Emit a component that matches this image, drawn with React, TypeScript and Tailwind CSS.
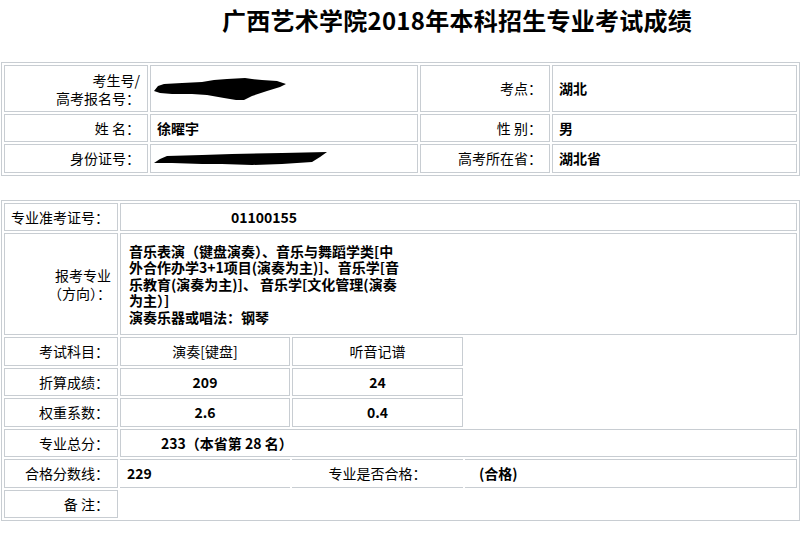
const cell = 'border border-[#c8cdd2] p-0 align-middle'
const label = 'border border-[#c8cdd2] p-0 align-middle text-right text-[14px] font-normal'
const font = { fontFamily: '"Noto Sans CJK SC", "Noto Sans", sans-serif' }

function BlobOne() {
  return (
    <svg width="136" height="26" viewBox="0 0 136 26" className="block">
      <path
        d="M2 15 L6 10 L12 8 L30 7 L50 6 L62 4 L75 3 L93 2 L100 3 L110 4 L125 5 L134 8 L128 11 L115 15 L100 20 L92 24 L84 24 L72 22 L55 19 L40 18 L20 18 L8 17 Z"
        fill="#000"
      />
    </svg>
  )
}

function BlobTwo() {
  return (
    <svg width="178" height="16" viewBox="0 0 178 16" className="block">
      <path
        d="M2 12 L8 8 L15 5 L50 4 L80 3 L130 2 L175 1 L168 6 L160 11 L130 13 L100 14 L70 13 L50 13 L20 12 Z"
        fill="#000"
      />
    </svg>
  )
}

export default function App() {
  return (
    <div className="w-[800px] h-[535px] bg-white text-black overflow-hidden" style={font}>
      {/* Title */}
      <div className="h-[62px] pl-[222px] pt-[5px]">
        <h1 className="text-[24px] leading-[30px] font-bold tracking-[0.25px] whitespace-nowrap">
          广西艺术学院2018年本科招生专业考试成绩
        </h1>
      </div>

      {/* Candidate info */}
      <table className="ml-[1px] w-[799px] table-fixed border-separate border-spacing-[2px] border border-[#c8cdd2]">
        <colgroup>
          <col className="w-[144px]" />
          <col className="w-[268px]" />
          <col className="w-[130px]" />
          <col className="w-[245px]" />
        </colgroup>
        <tbody>
          <tr>
            <td className={`${label} h-[47px] pr-[7px] leading-[18px]`}>
              考生号/<br />高考报名号：
            </td>
            <td className={`${cell} pl-[1px]`}>
              <BlobOne />
            </td>
            <td className={`${label} pr-[7px]`}>考点：</td>
            <td className={`${cell} pl-[6px] text-[14px] font-bold`}>湖北</td>
          </tr>
          <tr>
            <td className={`${label} h-[28px] pr-[7px]`}>姓 名：</td>
            <td className={`${cell} pl-[6px] text-[14px] font-bold`}>徐曜宇</td>
            <td className={`${label} pr-[7px]`}>性 别：</td>
            <td className={`${cell} pl-[6px] text-[14px] font-bold`}>男</td>
          </tr>
          <tr>
            <td className={`${label} h-[29px] pr-[7px]`}>身份证号：</td>
            <td className={`${cell} pl-[1px]`}>
              <BlobTwo />
            </td>
            <td className={`${label} pr-[7px]`}>高考所在省：</td>
            <td className={`${cell} pl-[6px] text-[14px] font-bold`}>湖北省</td>
          </tr>
        </tbody>
      </table>

      {/* Scores */}
      <table className="mt-[24px] ml-[1px] w-[799px] table-fixed border-separate border-spacing-[2px] border border-[#c8cdd2]">
        <colgroup>
          <col className="w-[114px]" />
          <col className="w-[170px]" />
          <col className="w-[171px]" />
          <col className="w-[332px]" />
        </colgroup>
        <tbody>
          <tr>
            <td className={`${label} h-[28px] pr-[8px]`}>专业准考证号：</td>
            <td colSpan={3} className={`${cell} pl-[110px] text-[14px] font-bold`}>01100155</td>
          </tr>
          <tr>
            <td className={`${label} h-[102px] pr-[6px] leading-[18px]`}>
              报考专业<br />（方向）：
            </td>
            <td colSpan={3} className={`${cell} pl-[8px] text-[14px] font-bold leading-[16.4px] whitespace-nowrap`}>
              音乐表演（键盘演奏）、音乐与舞蹈学类[中<br />
              外合作办学3+1项目(演奏为主)]、音乐学[音<br />
              乐教育(演奏为主)]、 音乐学[文化管理(演奏<br />
              为主）]<br />
              演奏乐器或唱法：钢琴
            </td>
          </tr>
          <tr>
            <td className={`${label} h-[29px] pr-[8px]`}>考试科目：</td>
            <td className={`${cell} text-center text-[14px]`}>演奏[键盘]</td>
            <td className={`${cell} text-center text-[14px]`}>听音记谱</td>
            <td className="p-0" />
          </tr>
          <tr>
            <td className={`${label} h-[28px] pr-[8px]`}>折算成绩：</td>
            <td className={`${cell} text-center text-[14px] font-bold`}>209</td>
            <td className={`${cell} text-center text-[14px] font-bold`}>24</td>
            <td className="p-0" />
          </tr>
          <tr>
            <td className={`${label} h-[29px] pr-[8px]`}>权重系数：</td>
            <td className={`${cell} text-center text-[14px] font-bold`}>2.6</td>
            <td className={`${cell} text-center text-[14px] font-bold`}>0.4</td>
            <td className="p-0" />
          </tr>
          <tr>
            <td className={`${label} h-[28px] pr-[8px]`}>专业总分：</td>
            <td colSpan={3} className={`${cell} pl-[40px] text-[14px] font-bold`}>233（本省第 28 名）</td>
          </tr>
          <tr>
            <td className={`${label} h-[29px] pr-[8px]`}>合格分数线：</td>
            <td className="p-0 pl-[7px] align-middle border-y border-[#c8cdd2] text-[14px] font-bold">229</td>
            <td className="p-0 align-middle border-y border-[#c8cdd2] text-center text-[14px]">专业是否合格：</td>
            <td className="p-0 pl-[14px] align-middle border-y border-r border-[#c8cdd2] text-[14px] font-bold">(合格)</td>
          </tr>
          <tr>
            <td className={`${label} h-[28px] pr-[8px]`}>备 注：</td>
            <td className="p-0" />
            <td className="p-0" />
            <td className="p-0" />
          </tr>
        </tbody>
      </table>
    </div>
  )
}
